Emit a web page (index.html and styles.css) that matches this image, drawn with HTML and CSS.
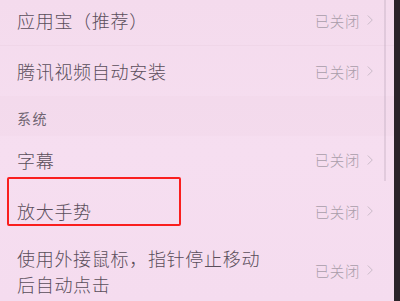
FILE: index.html
```html
<!DOCTYPE html>
<html lang="zh-CN">
<head>
<meta charset="utf-8">
<link rel="stylesheet" href="styles.css">
</head>
<body>
<div class="screen">
  <div class="list">
    <div class="row row-a">
      <span class="title">应用宝（推荐）</span>
      <span class="status">已关闭<svg class="chev" viewBox="0 0 8 14"><polyline points="1,1 7,7 1,13"/></svg></span>
    </div>
    <div class="row row-b">
      <span class="title">腾讯视频自动安装</span>
      <span class="status">已关闭<svg class="chev" viewBox="0 0 8 14"><polyline points="1,1 7,7 1,13"/></svg></span>
    </div>
    <div class="section">系统</div>
    <div class="row row-c">
      <span class="title">字幕</span>
      <span class="status">已关闭<svg class="chev" viewBox="0 0 8 14"><polyline points="1,1 7,7 1,13"/></svg></span>
    </div>
    <div class="row row-d">
      <span class="title">放大手势</span>
      <span class="status">已关闭<svg class="chev" viewBox="0 0 8 14"><polyline points="1,1 7,7 1,13"/></svg></span>
    </div>
    <div class="row row-e">
      <span class="title multi">使用外接鼠标，指针停止移动<br>后自动点击</span>
      <span class="status">已关闭<svg class="chev" viewBox="0 0 8 14"><polyline points="1,1 7,7 1,13"/></svg></span>
    </div>
    <div class="scrollbar"></div>
    <div class="highlight"></div>
  </div>
  <div class="bezel"></div>
</div>
</body>
</html>
```
FILE: styles.css
```css
html, body {
  margin: 0;
  padding: 0;
  width: 400px;
  height: 301px;
  overflow: hidden;
}
body {
  font-family: "Noto Sans CJK SC", "Noto Sans", sans-serif;
  background: #f5dcef;
}
.screen {
  display: flex;
  width: 400px;
  height: 301px;
}
.list {
  position: relative;
  flex: 1;
  display: flex;
  flex-direction: column;
  background: linear-gradient(180deg, #f4dbed 0%, #f6def0 50%, #f5dcef 100%);
}
.bezel {
  width: 6px;
  background: #2b2329;
}
.row {
  display: flex;
  align-items: center;
  justify-content: space-between;
  padding: 0 21px 0 17px;
  flex-shrink: 0;
}
.row-a { height: 50px; margin-top: -5px; border-bottom: 1px solid rgba(150, 110, 140, 0.05); }
.row-b { height: 50px; }
.row-c { height: 47px; }
.row-d { height: 56px; }
.row-e { height: 62px; }
.section {
  height: 40px;
  display: flex;
  align-items: center;
  padding: 4px 0 0 17px;
  box-sizing: border-box;
  font-size: 14px;
  letter-spacing: 1.5px;
  color: #716572;
  background: rgba(200, 160, 190, 0.04);
}
.title {
  font-size: 18px;
  font-weight: 300;
  letter-spacing: 0.7px;
  color: #5a4e5b;
  line-height: 26px;
}
.title.multi {
  padding-top: 2px;
}
.status {
  display: flex;
  align-items: center;
  font-size: 14.5px;
  font-weight: 300;
  letter-spacing: 0.6px;
  color: #a99daa;
}
.chev {
  width: 6px;
  height: 12px;
  margin-left: 7px;
  fill: none;
  stroke: #c4b6c3;
  stroke-width: 1.2;
}
.scrollbar {
  position: absolute;
  left: 384px;
  top: 0;
  width: 2px;
  height: 181px;
  background: rgba(180, 160, 178, 0.3);
}
.highlight {
  position: absolute;
  left: 7px;
  top: 177px;
  width: 170px;
  height: 45px;
  border: 2px solid #fa1e1e;
  border-radius: 2px;
}
```
